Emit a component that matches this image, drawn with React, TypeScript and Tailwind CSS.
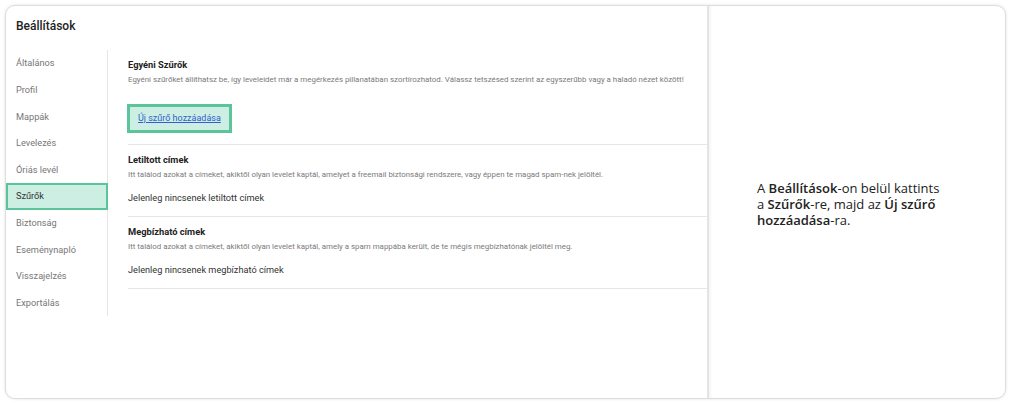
import React from "react";

const navItems = [
  "Általános",
  "Profil",
  "Mappák",
  "Levelezés",
  "Óriás levél",
  "Szűrők",
  "Biztonság",
  "Eseménynapló",
  "Visszajelzés",
  "Exportálás",
];

function Section({
  title,
  desc,
  children,
}: {
  title: string;
  desc: string;
  children: React.ReactNode;
}) {
  return (
    <div className="pt-[8px] pb-[11px] border-b border-[#e6e6e6]">
      <div className="text-[9.3px] leading-[14px] font-bold text-[#222]">{title}</div>
      <div className="mt-[2px] text-[7.9px] leading-[12px] text-[#7a7a7a]">{desc}</div>
      {children}
    </div>
  );
}

export default function App() {
  return (
    <div className="w-[1011px] h-[403px] bg-white p-[5px]" style={{ fontFamily: "Roboto, 'Liberation Sans', sans-serif" }}>
      <div className="w-[1001px] h-[394px] rounded-[10px] border border-[#dedede] shadow-[0_0_3px_rgba(0,0,0,0.12)] flex overflow-hidden bg-white">
        <div className="w-[701px] flex flex-col">
          <div className="h-[40px] pl-[10px] flex items-center text-[12px] font-medium text-[#222]">Beállítások</div>
          <div className="h-[4px]" />
          <div className="flex">
            <div className="w-[102px] border-r border-[#e6e6e6]">
              {navItems.map((n) => {
                const sel = n === "Szűrők";
                return (
                  <div
                    key={n}
                    className={`h-[26.6px] flex items-center text-[9.2px] ${
                      sel
                        ? "bg-[#cdeee2] border-2 border-[#5bc49a] pl-[8px] text-[#333] -mr-px"
                        : "pl-[10px] text-[#777]"
                    }`}
                  >
                    {n}
                  </div>
                );
              })}
            </div>
            <div className="flex-1 pl-[20px]">
              <Section
                title="Egyéni Szűrők"
                desc="Egyéni szűrőket állíthatsz be, így leveleidet már a megérkezés pillanatában szortírozhatod. Válassz tetszésed szerint az egyszerűbb vagy a haladó nézet között!"
              >
                <div className="mt-[18px] -ml-px inline-flex items-center h-[29px] px-[8px] bg-[#cdeee2] border-[3px] border-[#5bc49a]">
                  <span className="text-[9px] text-[#2f5fd0] underline">Új szűrő hozzáadása</span>
                </div>
              </Section>
              <Section
                title="Letiltott címek"
                desc="Itt találod azokat a címeket, akiktől olyan levelet kaptál, amelyet a freemail biztonsági rendszere, vagy éppen te magad spam-nek jelöltél."
              >
                <div className="mt-[10px] text-[9.2px] leading-[14px] text-[#333]">Jelenleg nincsenek letiltott címek</div>
              </Section>
              <Section
                title="Megbízható címek"
                desc="Itt találod azokat a címeket, akiktől olyan levelet kaptál, amely a spam mappába került, de te mégis megbízhatónak jelöltél meg."
              >
                <div className="mt-[10px] text-[9.2px] leading-[14px] text-[#333]">Jelenleg nincsenek megbízható címek</div>
              </Section>
            </div>
          </div>
        </div>
        <div className="flex-1 border-l-2 border-[#e4e4e4] shadow-[inset_2px_0_2px_rgba(0,0,0,0.04)] flex items-center pl-[48px] pt-[3px]">
          <div
            className="text-[13px] leading-[16px] text-[#222] whitespace-nowrap"
            style={{ fontFamily: "'Open Sans', Lato, sans-serif" }}
          >
            A <span className="font-semibold">Beállítások</span>-on belül kattints
            <br />
            a <span className="font-semibold">Szűrők</span>-re, majd az <span className="font-semibold">Új szűrő</span>
            <br />
            <span className="font-semibold">hozzáadása</span>-ra.
          </div>
        </div>
      </div>
    </div>
  );
}
